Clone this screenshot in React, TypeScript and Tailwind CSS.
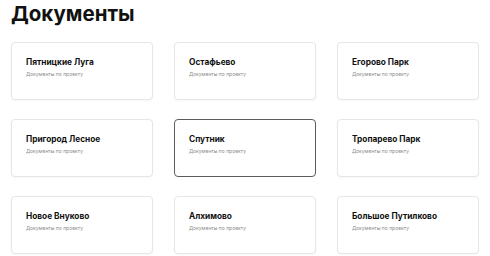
const projects = [
  'Пятницкие Луга',
  'Остафьево',
  'Егорово Парк',
  'Пригород Лесное',
  'Спутник',
  'Тропарево Парк',
  'Новое Внуково',
  'Алхимово',
  'Большое Путилково',
];

function ProjectCard({ name, active }: { name: string; active?: boolean }) {
  return (
    <div
      className={
        active
          ? 'h-[58px] rounded-[4px] border border-[#5c5c5c] bg-white px-[14px] pt-[14px]'
          : 'h-[58px] rounded-[4px] border border-[#e6e6e6] bg-white px-[14px] pt-[14px] shadow-[0_1px_2px_rgba(0,0,0,0.04)]'
      }
    >
      <p className="text-[8.3px] font-bold leading-[10px] text-[#111]">{name}</p>
      <p className="mt-[4px] text-[5px] leading-[6px] text-[#8a8a8a]">Документы по проекту</p>
    </div>
  );
}

export default function App() {
  return (
    <div className="h-[256px] w-[490px] overflow-hidden bg-white px-[11px] pt-[2px] font-['Inter',sans-serif]">
      <h1 className="text-[20.5px] font-bold leading-[24px] text-[#111]">Документы</h1>
      <div className="mt-[16px] grid grid-cols-3 gap-x-[21px] gap-y-[19px]">
        {projects.map((p) => (
          <ProjectCard key={p} name={p} active={p === 'Спутник'} />
        ))}
      </div>
    </div>
  );
}
